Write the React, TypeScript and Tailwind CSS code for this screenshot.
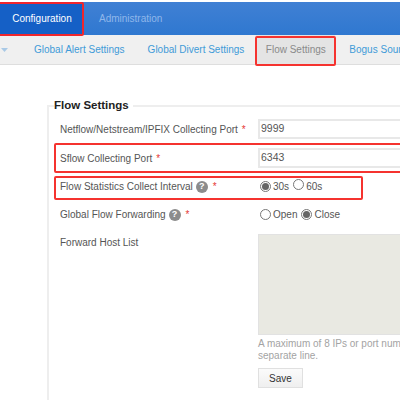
const Star = () => <span className="text-[#e53935] ml-1">*</span>;

const Help = () => (
  <span className="inline-flex items-center justify-center w-[12px] h-[12px] rounded-full bg-[#8c8c8c] text-white text-[9px] font-bold ml-[3px] mr-[1px] align-middle">
    ?
  </span>
);

const Radio = ({ checked }: { checked?: boolean }) => (
  <span className="inline-flex items-center justify-center w-[11px] h-[11px] rounded-full border border-[#777] bg-white shrink-0">
    {checked && <span className="w-[7px] h-[7px] rounded-full bg-[#666]" />}
  </span>
);

const Input = ({ value }: { value: string }) => (
  <div className="w-[300px] shrink-0 h-[20px] border-2 border-[#e8e8e8] flex items-center pl-[1px] text-[#555] text-[10.5px]">{value}</div>
);

const App = () => {
  return (
    <div className="relative w-[400px] h-[400px] overflow-hidden bg-white text-[10px] text-[#555] font-['Liberation_Sans',Arial,sans-serif]">
      {/* top nav */}
      <div className="mt-[2px] h-[33px] flex bg-gradient-to-b from-[#4080d4] to-[#2f78d0]">
        <div className="w-[83px] flex items-center justify-center pl-[1px] bg-[#1560c6] text-white">Configuration</div>
        <div className="pl-[16px] flex items-center text-[#8fb7ea]">Administration</div>
      </div>

      {/* sub nav */}
      <div className="h-[30px] flex items-center bg-[#f0f0f0] border-b border-[#dedede] text-[#3f9bd8] whitespace-nowrap">
        <svg width="7" height="4" viewBox="0 0 7 4" className="ml-[1px] shrink-0">
          <path d="M0 0h7L3.5 4z" fill="#a9c9e6" />
        </svg>
        <span className="ml-[26px]">Global Alert Settings</span>
        <span className="ml-[23px]">Global Divert Settings</span>
        <span className="ml-[12px] h-[29px] w-[79px] shrink-0 flex items-center justify-center bg-[#e4e4e4] text-[#8a8a8a]">Flow Settings</span>
        <span className="ml-[14px]">Bogus Source</span>
      </div>

      {/* form */}
      <div className="ml-[47px] mt-[40px] w-[420px] h-[300px] border-t-2 border-l-2 border-[#eeeeee] whitespace-nowrap">
        <div className="-mt-[10px] ml-[5px] w-fit bg-white pr-1 text-[11.5px] leading-[16px] font-bold text-[#222]">Flow Settings</div>

        <div className="ml-[11px] mt-[6px] flex flex-col">
          <div className="flex items-center h-[20px]">
            <div className="w-[198px] shrink-0">Netflow/Netstream/IPFIX Collecting Port<Star /></div>
            <Input value="9999" />
          </div>
          <div className="flex items-center h-[20px] mt-[9px]">
            <div className="w-[198px] shrink-0">Sflow Collecting Port<Star /></div>
            <Input value="6343" />
          </div>
          <div className="flex items-center h-[16px] mt-[10px]">
            <div className="w-[198px] shrink-0">Flow Statistics Collect Interval<Help /><Star /></div>
            <div className="flex items-center ml-[2px]">
              <Radio checked /><span className="ml-[2px]">30s</span>
              <span className="ml-[4px]"><Radio /></span><span className="ml-[2px]">60s</span>
            </div>
          </div>
          <div className="flex items-center h-[16px] mt-[12px]">
            <div className="w-[198px] shrink-0">Global Flow Forwarding<Help /><Star /></div>
            <div className="flex items-center ml-[2px]">
              <Radio /><span className="ml-[2px]">Open</span>
              <span className="ml-[4px]"><Radio checked /></span><span className="ml-[2px]">Close</span>
            </div>
          </div>
          <div className="flex items-start mt-[12px]">
            <div className="w-[198px] shrink-0 pt-[1px]">Forward Host List</div>
            <div className="w-[300px] shrink-0">
              <div className="h-[101px] bg-[#e9e9e2] border border-[#e2e2e2]" />
              <p className="mt-[3px] leading-[12px] text-[#a3a3a3]">A maximum of 8 IPs or port numbers, each on a<br />separate line.</p>
              <button className="mt-[6px] block w-[45px] h-[20px] border border-[#e0e0e0] bg-gradient-to-b from-[#fbfbfb] to-[#efefef] text-[#333] text-[10px]">Save</button>
            </div>
          </div>
        </div>
      </div>

      {/* red annotation boxes */}
      <div className="absolute left-[-4px] top-[2px] w-[88px] h-[34px] border-2 border-[#f0262c] rounded-[2px]" />
      <div className="absolute left-[255px] top-[36px] w-[81px] h-[30px] border-2 border-[#f5332f] rounded-[2px]" />
      <div className="absolute left-[54px] top-[143px] w-[360px] h-[30px] border-2 border-[#f5332f] rounded-[2px]" />
      <div className="absolute left-[54px] top-[176px] w-[309px] h-[24px] border-2 border-[#f5332f] rounded-[2px]" />
    </div>
  );
};

export default App;
